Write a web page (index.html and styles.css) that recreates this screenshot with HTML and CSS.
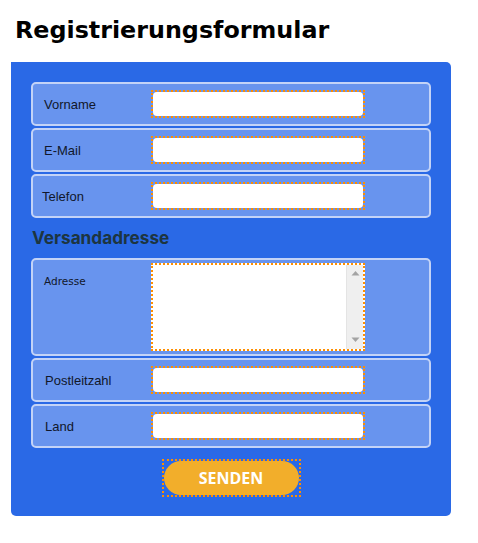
FILE: index.html
```html
<!DOCTYPE html>
<html lang="de">
<head>
<meta charset="utf-8">
<title>Registrierungsformular</title>
<link rel="stylesheet" href="styles.css">
</head>
<body>
<h1 class="title">Registrierungsformular</h1>
<form class="form">
  <div class="row"><label class="label">Vorname</label><span class="frame"><input class="field" type="text"></span></div>
  <div class="row"><label class="label">E-Mail</label><span class="frame"><input class="field" type="text"></span></div>
  <div class="row"><label class="label label-tel">Telefon</label><span class="frame"><input class="field" type="text"></span></div>
  <h2 class="section">Versandadresse</h2>
  <div class="row row-tall">
    <label class="label label-small">Adresse</label>
    <span class="frame frame-area">
      <textarea class="area"></textarea>
      <span class="scrollbar">
        <svg class="arrow" width="9" height="6" viewBox="0 0 9 6"><path d="M0.5 5.5 L4.5 1 L8.5 5.5 Z" fill="#a3a3a3"/></svg>
        <svg class="arrow" width="9" height="6" viewBox="0 0 9 6"><path d="M0.5 0.5 L4.5 5 L8.5 0.5 Z" fill="#a3a3a3"/></svg>
      </span>
    </span>
  </div>
  <div class="row"><label class="label label-zip">Postleitzahl</label><span class="frame"><input class="field" type="text"></span></div>
  <div class="row"><label class="label label-zip">Land</label><span class="frame"><input class="field" type="text"></span></div>
  <div class="actions"><span class="frame frame-btn"><button class="send" type="button">SENDEN</button></span></div>
</form>
</body>
</html>
```
FILE: styles.css
```css
html, body { margin: 0; padding: 0; background: #fff; }
body { padding: 12px 0 0 11px; }
.title {
  margin: 0 0 14px 4px;
  font-family: "DejaVu Sans", sans-serif;
  font-weight: bold;
  font-size: 23.8px;
  line-height: 36px;
  color: #000;
}
.form {
  width: 440px;
  height: 454px;
  box-sizing: border-box;
  background: #2a69e6;
  border-radius: 0 5px 5px 5px;
  padding: 20px 20px 0 20px;
}
.row {
  display: flex;
  align-items: center;
  height: 44px;
  box-sizing: border-box;
  border: 2px solid #c3d3f7;
  border-radius: 5px;
  background: #6894ee;
  margin-bottom: 2px;
}
.label {
  width: 118px;
  box-sizing: border-box;
  padding-left: 11px;
  font-family: "Liberation Sans", Arial, sans-serif;
  font-size: 13px;
  color: #11172a;
}
.label-tel { padding-left: 9px; }
.label-zip { padding-left: 12px; }
.frame {
  display: flex;
  border: 2px dotted #ff8f00;
}
.field {
  width: 210px;
  height: 24px;
  box-sizing: border-box;
  margin: 0;
  border: none;
  border-radius: 4px;
  background: #fff;
  outline: none;
  padding: 0 4px;
}
.row-tall {
  height: 98px;
  align-items: flex-start;
}
.label-small {
  font-family: "DejaVu Sans", sans-serif;
  font-size: 10.5px;
  padding-top: 15px;
}
.frame-area {
  margin-top: 3px;
  background: #fff;
}
.area {
  width: 193px;
  height: 84px;
  box-sizing: border-box;
  margin: 0;
  border: none;
  outline: none;
  resize: none;
  overflow: hidden;
  background: #fff;
}
.scrollbar {
  width: 17px;
  height: 84px;
  box-sizing: border-box;
  background: #efefef;
  border-left: 1px solid #e4e4e4;
  display: flex;
  flex-direction: column;
  justify-content: space-between;
  align-items: center;
  padding: 5px 0 6px;
}
.arrow { display: block; }
.section {
  margin: 10px 0 10px 1px;
  font-family: Inter, "Noto Sans", sans-serif;
  font-weight: 700;
  font-size: 17.2px;
  line-height: 20px;
  color: #1d3540;
}
.actions {
  display: flex;
  justify-content: center;
  padding-top: 9px;
}
.frame-btn { padding: 0; }
.send {
  width: 135px;
  height: 34px;
  margin: 0;
  border: none;
  border-radius: 17px;
  background: #f2ae2b;
  color: #fff;
  font-family: "Open Sans", sans-serif;
  font-weight: bold;
  font-size: 16px;
  outline: none;
}
```
